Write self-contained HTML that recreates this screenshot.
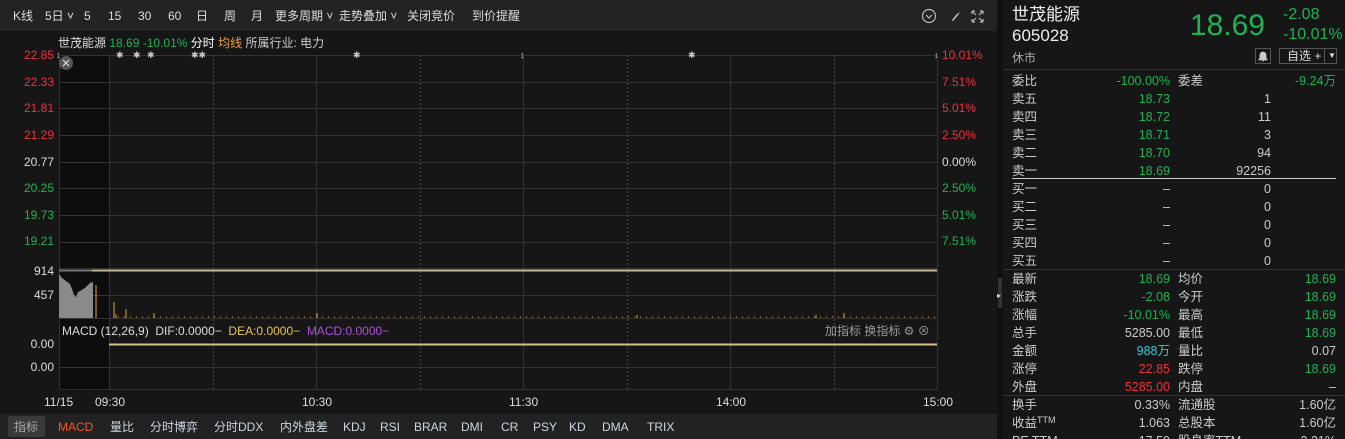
<!DOCTYPE html><html><head><meta charset="utf-8"><style>
*{margin:0;padding:0;box-sizing:border-box}
html,body{width:1345px;height:439px;overflow:hidden}
body{background:#161616;font-family:"Liberation Sans","Noto Sans CJK SC",sans-serif;font-size:12px;color:#ccc;position:relative;line-height:16px}
.a{position:absolute;white-space:nowrap}
.r{text-align:right}
.g{color:#1fb254}.red{color:#f0303c}.w{color:#ddd}
#tb{position:absolute;left:0;top:0;width:997px;height:31px;background:#232323}
#tb span{position:absolute;top:8px;color:#ddd;font-size:12px;line-height:16px}
#bt{position:absolute;left:0;top:414px;width:997px;height:25px;background:#222}
#bt span{position:absolute;top:5px;color:#cfd6e0;font-size:12px;line-height:16px}
#rp{position:absolute;left:1003px;top:0;width:342px;height:439px;background:#161616;overflow:hidden}
.row{position:absolute;left:0;width:342px;height:18px;font-size:12.5px;line-height:18px}
.row span{position:absolute;top:0;line-height:18px}
.row span.v{right:175px;text-align:right}
.row span.q{right:74px;text-align:right}
</style></head><body>
<div id="tb">
<span style="left:13px">K线</span><span style="left:45px">5日 ˅</span><span style="left:84px">5</span><span style="left:108px">15</span><span style="left:138px">30</span><span style="left:168px">60</span><span style="left:196px">日</span><span style="left:224px">周</span><span style="left:251px">月</span><span style="left:275px">更多周期 ˅</span><span style="left:339px">走势叠加 ˅</span><span style="left:407px">关闭竞价</span><span style="left:472px">到价提醒</span>
<svg style="position:absolute;left:920px;top:8px" width="80" height="18"><circle cx="9" cy="8" r="6.5" fill="none" stroke="#bbb" stroke-width="1.2"/><path d="M6 7l3 3 3-3" fill="none" stroke="#bbb" stroke-width="1.2"/><path d="M32 12l5-6 3-2-2 3-5 6z" fill="#ccc"/><path d="M52 3h3M52 3v3M63 3h-3M63 3v3M52 14h3M52 14v-3M63 14h-3M63 14v-3M53 4l3 3M62 4l-3 3M53 13l3-3M62 13l-3-3" stroke="#bbb" stroke-width="1.2" fill="none"/></svg>
</div>
<div style="position:absolute;left:997px;top:0;width:6px;height:439px;background:#111"></div>
<div style="position:absolute;left:998px;top:278px;width:4px;height:30px;background:#333"></div>
<div class="a" style="left:997px;top:288px;color:#ddd;font-size:8px">▸</div>
<svg class="a" style="left:0;top:31px" width="997" height="383">
<rect x="59" y="24" width="50" height="336" fill="#0d0d0d"/>
<g stroke="#333" stroke-width="1">
<line x1="59" y1="24.5" x2="937" y2="24.5"/><line x1="59" y1="51.5" x2="937" y2="51.5"/><line x1="59" y1="77.5" x2="937" y2="77.5"/><line x1="59" y1="104.5" x2="937" y2="104.5"/><line x1="59" y1="131.5" x2="937" y2="131.5"/><line x1="59" y1="157.5" x2="937" y2="157.5"/><line x1="59" y1="184.5" x2="937" y2="184.5"/><line x1="59" y1="211.5" x2="937" y2="211.5"/><line x1="59" y1="237.5" x2="937" y2="237.5"/>
<line x1="59" y1="264.5" x2="937" y2="264.5"/><line x1="59" y1="287.5" x2="937" y2="287.5"/>
<line x1="59" y1="336.5" x2="937" y2="336.5"/><line x1="59" y1="358.5" x2="937" y2="358.5"/>
<line x1="59.5" y1="24" x2="59.5" y2="359"/><line x1="109.5" y1="24" x2="109.5" y2="359"/><line x1="316.5" y1="24" x2="316.5" y2="359"/><line x1="523.5" y1="24" x2="523.5" y2="359"/><line x1="730.5" y1="24" x2="730.5" y2="359"/><line x1="937.5" y1="24" x2="937.5" y2="359"/>
</g>
<g stroke="#444" stroke-dasharray="2,2"><line x1="213.5" y1="24" x2="213.5" y2="359"/><line x1="420.5" y1="24" x2="420.5" y2="359"/><line x1="627.5" y1="24" x2="627.5" y2="359"/><line x1="834.5" y1="24" x2="834.5" y2="359"/></g>
<line x1="59" y1="239.5" x2="937" y2="239.5" stroke="#c8b89a" stroke-width="2"/>
<line x1="59" y1="239.5" x2="92" y2="239.5" stroke="#777" stroke-width="2"/>
<line x1="109" y1="313.5" x2="937" y2="313.5" stroke="#d4c089" stroke-width="2"/>
<path d="M59 243 L62 247 L66 250 L70 253 L72 258 L74 264 L76 266 L78 261 L82 259 L86 256 L90 252 L93 251 L93 287 L59 287Z" fill="#8a8a8a"/>
<g stroke="#f0a030" stroke-width="1"><line x1="96" y1="254" x2="96" y2="287"/><line x1="114" y1="271" x2="114" y2="287"/><line x1="116" y1="283" x2="116" y2="287"/><line x1="126" y1="278" x2="126" y2="287"/><line x1="154" y1="282" x2="154" y2="287"/><line x1="317" y1="282" x2="317" y2="287"/><line x1="637" y1="284" x2="637" y2="287"/><line x1="816" y1="284" x2="816" y2="287"/><line x1="844" y1="282" x2="844" y2="287"/></g>
<path d="M118 286h820" stroke="#f0a030" stroke-dasharray="1,5"/>
<circle cx="66" cy="32" r="7" fill="#555"/><path d="M63 29l6 6M69 29l-6 6" stroke="#ddd" stroke-width="1.2"/>
<g fill="#ccc" font-size="9"><text x="116" y="27">✱</text><text x="133" y="27">✱</text><text x="147" y="27">✱</text><text x="191" y="27">✱✱</text><text x="353" y="27">✱</text><text x="688" y="27">✱</text><text x="56" y="27">↕</text><text x="520" y="27">↕</text><text x="934" y="27">↕</text></g>
</svg>
<div class="a" style="left:58px;top:35px;font-size:12px"><span class="w">世茂能源</span> <span class="g">18.69 -10.01%</span> <span style="color:#fff">分时</span> <span style="color:#f0a030">均线</span> <span style="color:#ccc">所属行业: 电力</span></div>
<div class="a r red" style="left:0;width:54px;top:47px">22.85</div>
<div class="a r red" style="left:0;width:54px;top:74px">22.33</div>
<div class="a r red" style="left:0;width:54px;top:100px">21.81</div>
<div class="a r red" style="left:0;width:54px;top:127px">21.29</div>
<div class="a r w" style="left:0;width:54px;top:154px">20.77</div>
<div class="a r g" style="left:0;width:54px;top:180px">20.25</div>
<div class="a r g" style="left:0;width:54px;top:207px">19.73</div>
<div class="a r g" style="left:0;width:54px;top:233px">19.21</div>
<div class="a red" style="left:942px;top:47px">10.01%</div>
<div class="a red" style="left:942px;top:74px">7.51%</div>
<div class="a red" style="left:942px;top:100px">5.01%</div>
<div class="a red" style="left:942px;top:127px">2.50%</div>
<div class="a w" style="left:942px;top:154px">0.00%</div>
<div class="a g" style="left:942px;top:180px">2.50%</div>
<div class="a g" style="left:942px;top:207px">5.01%</div>
<div class="a g" style="left:942px;top:233px">7.51%</div>
<div class="a r w" style="left:0;width:54px;top:263px">914</div>
<div class="a r w" style="left:0;width:54px;top:287px">457</div>
<div class="a" style="left:62px;top:323px;font-size:12px"><span class="w">MACD (12,26,9)</span>&nbsp; <span class="w">DIF:0.0000−</span>&nbsp; <span style="color:#e8c84a">DEA:0.0000−</span>&nbsp; <span style="color:#b050e0">MACD:0.0000−</span></div>
<div class="a" style="left:825px;top:323px;color:#999">加指标 换指标 ⚙ ⊗</div>
<div class="a r w" style="left:0;width:54px;top:336px">0.00</div>
<div class="a r w" style="left:0;width:54px;top:359px">0.00</div>
<div class="a w" style="left:44px;top:394px">11/15</div><div class="a w" style="left:95px;top:394px">09:30</div><div class="a w" style="left:302px;top:394px">10:30</div><div class="a w" style="left:509px;top:394px">11:30</div><div class="a w" style="left:716px;top:394px">14:00</div><div class="a w" style="left:923px;top:394px">15:00</div>
<div id="bt"><div style="position:absolute;left:8px;top:2px;width:37px;height:21px;background:#3a3a3a;border-radius:2px"></div>
<span style="left:14px;color:#aaa">指标</span><span style="left:58px;color:#f05a1e">MACD</span><span style="left:110px">量比</span><span style="left:150px">分时博弈</span><span style="left:214px">分时DDX</span><span style="left:280px">内外盘差</span><span style="left:343px">KDJ</span><span style="left:380px">RSI</span><span style="left:414px">BRAR</span><span style="left:461px">DMI</span><span style="left:501px">CR</span><span style="left:533px">PSY</span><span style="left:569px">KD</span><span style="left:602px">DMA</span><span style="left:647px">TRIX</span></div>
<div id="rp">
<div class="a" style="left:9px;top:5px;font-size:17px;line-height:20px;color:#eee">世茂能源</div>
<div class="a" style="left:9px;top:26px;font-size:17px;line-height:20px;color:#eee">605028</div>
<div class="a" style="left:9px;top:50px;font-size:12px;color:#aaa">休市</div>
<div class="a g r" style="left:150px;width:112px;top:8px;font-size:30px;line-height:36px">18.69</div>
<div class="a g" style="left:280px;top:6px;font-size:16px;line-height:18px">-2.08</div>
<div class="a g" style="left:280px;top:26px;font-size:16px;line-height:18px">-10.01%</div>
<div class="a" style="left:252px;top:48px;width:16px;height:16px;border:1px solid #555"><svg width="14" height="14"><path d="M4 10V6a3 3 0 0 1 6 0v4h1v1H3v-1z M6 12h2" fill="#ccc" stroke="#ccc" stroke-width=".8"/></svg></div>
<div class="a" style="left:276px;top:48px;width:58px;height:16px;border:1px solid #555;color:#ddd;font-size:12px;line-height:14px;padding-left:7px">自选 + <span style="position:absolute;left:44px;top:0;border-left:1px solid #555;padding-left:3px;font-size:8px">▼</span></div>
<div class="a" style="left:0;top:69px;width:342px;height:1px;background:#333"></div>
<div class="a" style="left:9px;top:178px;width:324px;height:1px;background:#ccc"></div>
<div class="row" style="top:72px"><span style="left:9px">委比</span><span class="g v">-100.00%</span><span style="left:175px">委差</span><span class="g r" style="right:9px">-9.24万</span></div>
<div class="row" style="top:90px"><span style="left:9px">卖五</span><span class="g v">18.73</span><span class="q">1</span></div>
<div class="row" style="top:108px"><span style="left:9px">卖四</span><span class="g v">18.72</span><span class="q">11</span></div>
<div class="row" style="top:126px"><span style="left:9px">卖三</span><span class="g v">18.71</span><span class="q">3</span></div>
<div class="row" style="top:144px"><span style="left:9px">卖二</span><span class="g v">18.70</span><span class="q">94</span></div>
<div class="row" style="top:162px"><span style="left:9px">卖一</span><span class="g v">18.69</span><span class="q">92256</span></div>
<div class="row" style="top:180px"><span style="left:9px">买一</span><span class="v">–</span><span class="q">0</span></div>
<div class="row" style="top:198px"><span style="left:9px">买二</span><span class="v">–</span><span class="q">0</span></div>
<div class="row" style="top:216px"><span style="left:9px">买三</span><span class="v">–</span><span class="q">0</span></div>
<div class="row" style="top:234px"><span style="left:9px">买四</span><span class="v">–</span><span class="q">0</span></div>
<div class="row" style="top:252px"><span style="left:9px">买五</span><span class="v">–</span><span class="q">0</span></div>
<div class="a" style="left:0;top:269px;width:342px;height:1px;background:#333"></div>
<div class="row" style="top:270px"><span style="left:9px">最新</span><span class="g v">18.69</span><span style="left:175px">均价</span><span class="g r" style="right:9px">18.69</span></div>
<div class="row" style="top:288px"><span style="left:9px">涨跌</span><span class="g v">-2.08</span><span style="left:175px">今开</span><span class="g r" style="right:9px">18.69</span></div>
<div class="row" style="top:306px"><span style="left:9px">涨幅</span><span class="g v">-10.01%</span><span style="left:175px">最高</span><span class="g r" style="right:9px">18.69</span></div>
<div class="row" style="top:324px"><span style="left:9px">总手</span><span class="v">5285.00</span><span style="left:175px">最低</span><span class="g r" style="right:9px">18.69</span></div>
<div class="row" style="top:342px"><span style="left:9px">金额</span><span class="v" style="color:#3cc8d8">988万</span><span style="left:175px">量比</span><span class="r" style="right:9px">0.07</span></div>
<div class="row" style="top:360px"><span style="left:9px">涨停</span><span class="red v">22.85</span><span style="left:175px">跌停</span><span class="g r" style="right:9px">18.69</span></div>
<div class="row" style="top:378px"><span style="left:9px">外盘</span><span class="red v">5285.00</span><span style="left:175px">内盘</span><span class="r" style="right:9px">–</span></div>
<div class="a" style="left:0;top:395px;width:342px;height:1px;background:#333"></div>
<div class="row" style="top:396px"><span style="left:9px">换手</span><span class="v">0.33%</span><span style="left:175px">流通股</span><span class="r" style="right:9px">1.60亿</span></div>
<div class="row" style="top:414px"><span style="left:9px">收益<span style="position:relative;font-size:9px;top:-4px;line-height:9px">TTM</span></span><span class="v">1.063</span><span style="left:175px">总股本</span><span class="r" style="right:9px">1.60亿</span></div>
<div class="row" style="top:432px"><span style="left:9px">PE TTM</span><span class="v">17.59</span><span style="left:175px">股息率TTM</span><span class="r" style="right:9px">3.21%</span></div>
</div>
</body></html>
